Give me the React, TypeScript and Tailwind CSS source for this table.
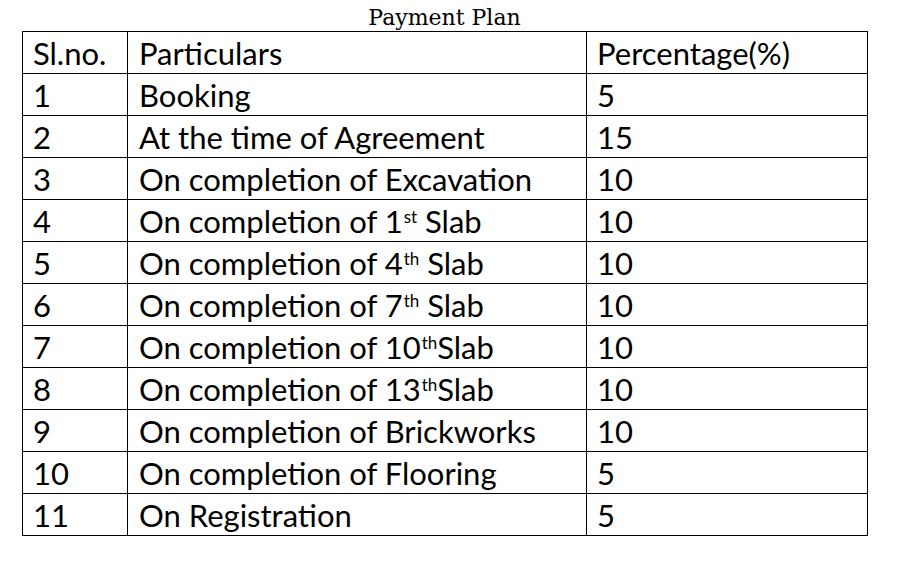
import React from "react"

const Sup = ({ children }: { children: React.ReactNode }) => (
  <span className="text-[17px] leading-none align-[10px] ml-[1px]">{children}</span>
)

const rows: { no: string; text: React.ReactNode; pct: string }[] = [
  { no: "1", text: "Booking", pct: "5" },
  { no: "2", text: "At the time of Agreement", pct: "15" },
  { no: "3", text: "On completion of Excavation", pct: "10" },
  { no: "4", text: <>On completion of 1<Sup>st</Sup> Slab</>, pct: "10" },
  { no: "5", text: <>On completion of 4<Sup>th</Sup> Slab</>, pct: "10" },
  { no: "6", text: <>On completion of 7<Sup>th</Sup> Slab</>, pct: "10" },
  { no: "7", text: <>On completion of 10<Sup>th</Sup>Slab</>, pct: "10" },
  { no: "8", text: <>On completion of 13<Sup>th</Sup>Slab</>, pct: "10" },
  { no: "9", text: "On completion of Brickworks", pct: "10" },
  { no: "10", text: "On completion of Flooring", pct: "5" },
  { no: "11", text: "On Registration", pct: "5" },
]

export default function App() {
  return (
    <div className="w-[913px] h-[564px] bg-white text-black">
      <div className="pt-[4px] pl-[22px]">
        <div className="w-[845px] text-center font-['DejaVu_Serif',serif] text-[22px] leading-[27px]">
          Payment Plan
        </div>
        <table className="border-collapse w-[845px] table-fixed font-['Lato','Liberation_Sans',sans-serif] text-[31px]">
          <colgroup>
            <col className="w-[105px]" />
            <col className="w-[459px]" />
            <col className="w-[281px]" />
          </colgroup>
          <tbody>
            <tr className="h-[42px]">
              <td className="border border-black px-[10px] leading-none pt-[2px]">Sl.no.</td>
              <td className="border border-black px-[11px] leading-none pt-[2px]">Particulars</td>
              <td className="border border-black px-[10px] leading-none pt-[2px]">Percentage(%)</td>
            </tr>
            {rows.map((r) => (
              <tr key={r.no} className="h-[42px]">
                <td className="border border-black px-[10px] leading-none pt-[2px]">{r.no}</td>
                <td className="border border-black px-[11px] leading-none pt-[2px] whitespace-nowrap">{r.text}</td>
                <td className="border border-black px-[10px] leading-none pt-[2px]">{r.pct}</td>
              </tr>
            ))}
          </tbody>
        </table>
      </div>
    </div>
  )
}
